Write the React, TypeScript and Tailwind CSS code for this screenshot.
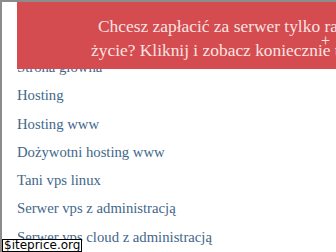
const links = [
  "Strona główna",
  "Hosting",
  "Hosting www",
  "Dożywotni hosting www",
  "Tani vps linux",
  "Serwer vps z administracją",
  "Serwer vps cloud z administracją",
  "Serwer dedykowany",
]

export default function App() {
  return (
    <div className="relative w-[336px] h-[252px] overflow-hidden bg-white border-t-2 border-l-2 border-[#8c8c8c] font-['Liberation_Serif',serif]">
      <ul className="pl-[15px] pt-[51px]">
        {links.map((l) => (
          <li key={l} className="text-[14.7px] leading-[28.3px] text-[#41678a] whitespace-nowrap">
            <a href="#">{l}</a>
          </li>
        ))}
      </ul>

      {/* banner */}
      <div className="absolute left-[15px] top-0 w-[420px] h-[67px] bg-[#d44b50] text-[#fbe3e1] text-[17.4px] leading-[24px] pl-[81px] pt-[12px] whitespace-nowrap">
        <p>Chcesz zapłacić za serwer tylko raz w</p>
        <p className="-ml-[7px]">życie? Kliknij i zobacz koniecznie to</p>
      </div>
      <span className="absolute left-[319px] top-[27px] text-[#fbe3e1] text-[16px]">+</span>

      <div className="absolute left-0 bottom-0 bg-white border border-black px-[1px] text-[12px] leading-[11px] text-black font-['DejaVu_Sans',sans-serif]">
        $iteprice.org
      </div>
    </div>
  )
}
